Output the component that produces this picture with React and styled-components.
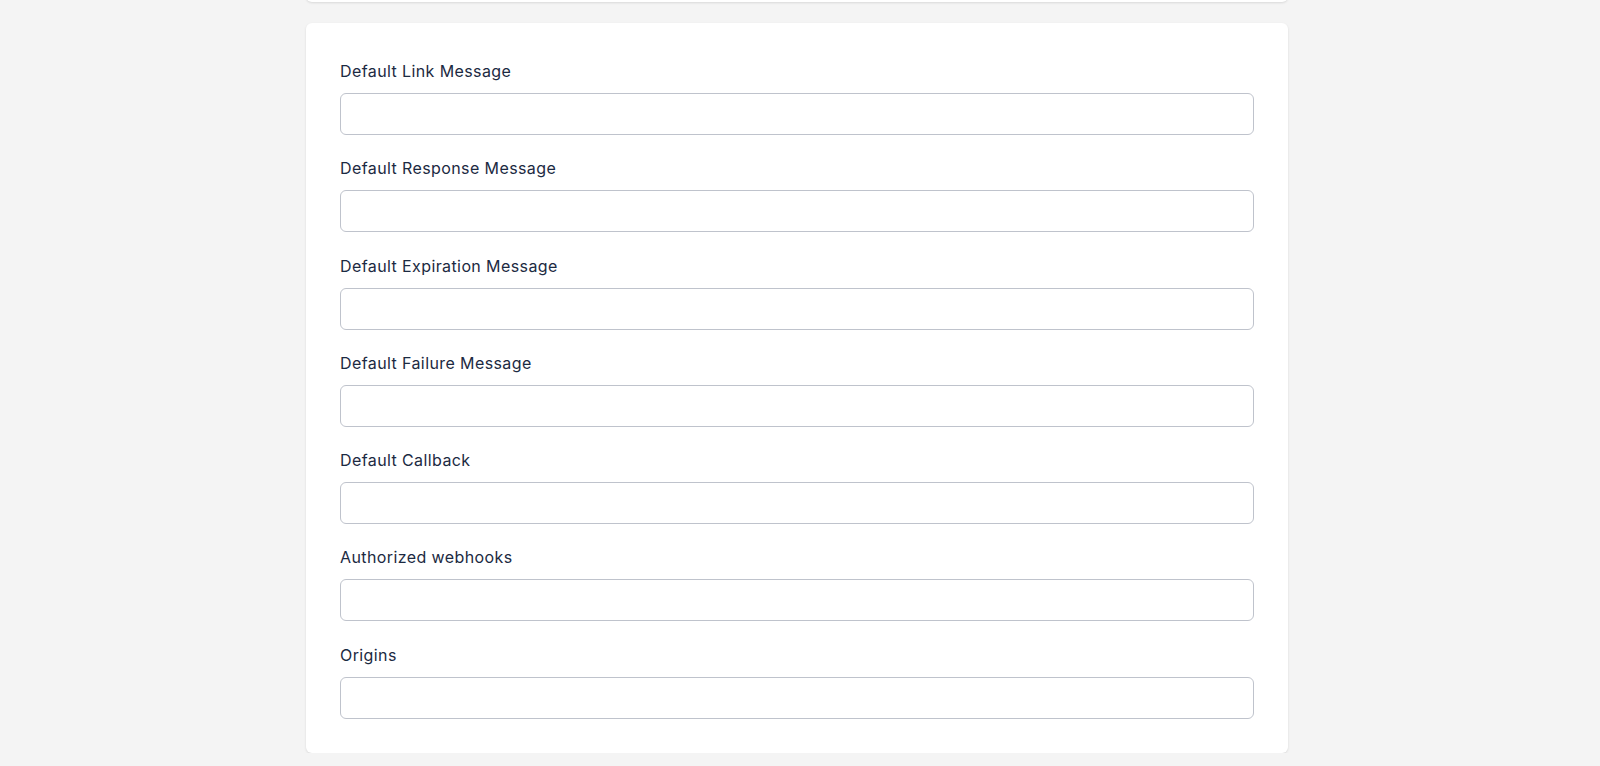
import React from "react";
import styled, { createGlobalStyle } from "styled-components";

const fields = [
  "Default Link Message",
  "Default Response Message",
  "Default Expiration Message",
  "Default Failure Message",
  "Default Callback",
  "Authorized webhooks",
  "Origins",
];

const GlobalStyle = createGlobalStyle`
  html, body {
    margin: 0;
    padding: 0;
    background: #f4f4f4;
    font-family: Inter, "Noto Sans", sans-serif;
    overflow: hidden;
  }
`;

const Page = styled.div`
  width: 982px;
  margin: -40px 0 0 306px;
  display: flex;
  flex-direction: column;
  gap: 21px;
`;

const Card = styled.div`
  background: #ffffff;
  border-radius: 6px;
  box-shadow: 0 1px 3px rgba(0, 0, 0, 0.08), 0 1px 2px rgba(0, 0, 0, 0.04);
  height: ${({ $height }) => ($height ? `${$height}px` : "auto")};
  padding: ${({ $height }) => ($height ? "0" : "34px")};
  display: flex;
  flex-direction: column;
  gap: 19.3px;
`;

const Field = styled.div`
  display: flex;
  flex-direction: column;
  gap: 8px;
`;

const Label = styled.label`
  font-size: 16px;
  line-height: 28px;
  letter-spacing: 0.4px;
  color: #1c2a42;
`;

const Input = styled.input`
  box-sizing: border-box;
  height: 42px;
  width: 100%;
  border: 1px solid #bfc3cc;
  border-radius: 6px;
  background: #fff;
  padding: 0 12px;
  font-family: inherit;
  font-size: 16px;
  outline: none;
`;

export default function App() {
  return (
    <>
      <GlobalStyle />
      <Page>
        <Card $height={42} />
        <Card>
          {fields.map((name) => (
            <Field key={name}>
              <Label>{name}</Label>
              <Input type="text" />
            </Field>
          ))}
        </Card>
      </Page>
    </>
  );
}
